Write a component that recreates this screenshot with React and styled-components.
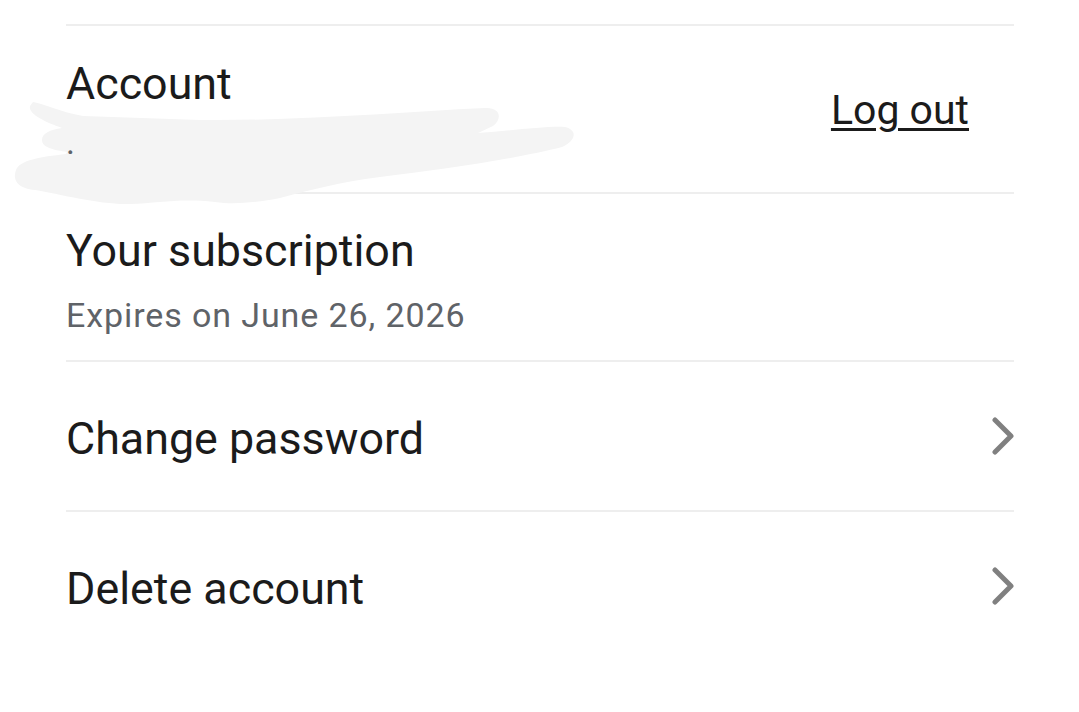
import React from "react";
import styled, { createGlobalStyle } from "styled-components";

const Global = createGlobalStyle`
  html, body { margin: 0; padding: 0; background: #ffffff; }
  body { font-family: Roboto, "Noto Sans", Arial, sans-serif; -webkit-font-smoothing: antialiased; }
`;

const Page = styled.div`
  padding: 24px 65px 0 66px;
  width: 1079px;
  box-sizing: border-box;
`;

const Row = styled.div`
  position: relative;
  display: flex;
  align-items: ${(p) => (p.$top ? "flex-start" : "center")};
  justify-content: space-between;
  border-top: 2px solid #eeeeee;
  box-sizing: border-box;
  height: ${(p) => p.$h}px;
  padding-top: ${(p) => p.$pt || 0}px;
`;

const Texts = styled.div`
  position: relative;
  z-index: 2;
  display: flex;
  flex-direction: column;
`;

const Title = styled.div`
  font-size: 44.8px;
  line-height: 54px;
  color: #1b1b1b;
  padding-top: ${(p) => p.$pad || 0}px;
`;

const Sub = styled.div`
  font-size: 34px;
  line-height: 40px;
  color: #5f6368;
  letter-spacing: 0.9px;
  margin-top: ${(p) => p.$mt}px;
`;

const LogOut = styled.a`
  font-size: 41px;
  color: #1b1b1b;
  text-decoration: underline;
  text-decoration-thickness: 3px;
  text-underline-offset: 4px;
  margin-right: 45px;
  margin-top: 2px;
`;

const Chevron = styled.svg`
  width: 22px;
  height: 38px;
  flex: none;
`;

const Redaction = styled.svg`
  position: absolute;
  left: -66px;
  top: -26px;
  width: 600px;
  height: 220px;
  pointer-events: none;
  z-index: 1;
`;

const Arrow = () => (
  <Chevron viewBox="0 0 22 38">
    <path d="M3 3 L19 19 L3 35" fill="none" stroke="#808080" strokeWidth="5" strokeLinecap="round" strokeLinejoin="round" />
  </Chevron>
);

export default function App() {
  return (
    <>
      <Global />
      <Page>
        <Row $h={168}>
          <Texts>
            <Title>Account</Title>
            <Sub $mt={11}>.</Sub>
          </Texts>
          <LogOut>Log out</LogOut>
          <Redaction viewBox="0 0 600 220">
            <path
              d="M33 102 C45 104 60 112 83 116 L200 120 C300 121 400 112 485 108 C500 107 503 118 493 126 L478 133 C510 131 545 126 565 127 C578 130 576 141 562 147 C520 158 440 170 380 177 C340 182 310 190 280 198 C260 202 235 205 215 202 C180 198 160 203 130 204 C100 205 60 194 35 190 C15 188 13 178 16 170 C20 160 40 157 66 154 L67 152 C55 150 42 148 42 140 C42 133 50 130 62 128 C45 122 28 114 30 106 Z"
              fill="#f4f4f4"
            />
          </Redaction>
        </Row>
        <Row $h={168} $top $pt={30}>
          <Texts>
            <Title>Your subscription</Title>
            <Sub $mt={17}>Expires on June 26, 2026</Sub>
          </Texts>
        </Row>
        <Row $h={150}>
          <Title $pad={6}>Change password</Title>
          <Arrow />
        </Row>
        <Row $h={150}>
          <Title $pad={6}>Delete account</Title>
          <Arrow />
        </Row>
      </Page>
    </>
  );
}
